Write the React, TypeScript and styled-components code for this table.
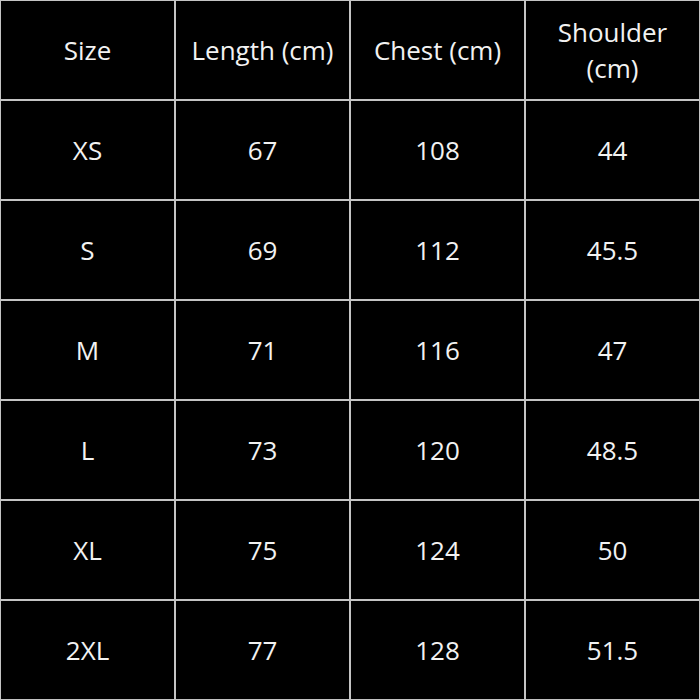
import React from "react";
import styled, { createGlobalStyle } from "styled-components";

const GlobalStyle = createGlobalStyle`
  html, body {
    margin: 0;
    padding: 0;
    background: #000;
  }
`;

const Frame = styled.div`
  width: 700px;
  height: 700px;
  overflow: hidden;
  background: #000;
`;

const Table = styled.table`
  width: 702px;
  height: 702px;
  margin: -1px;
  border-collapse: collapse;
  table-layout: fixed;
  font-family: "Open Sans", "Liberation Sans", sans-serif;
  font-size: 26px;
  color: #f2f2f2;
`;

const Cell = styled.td`
  border: 2px solid #c4c4c4;
  text-align: center;
  vertical-align: middle;
  height: 98px;
  padding: 0;
  line-height: 36px;
`;

const HeadCell = styled(Cell).attrs({ as: "th" })`
  font-weight: 400;
`;

const rows = [
  ["XS", "67", "108", "44"],
  ["S", "69", "112", "45.5"],
  ["M", "71", "116", "47"],
  ["L", "73", "120", "48.5"],
  ["XL", "75", "124", "50"],
  ["2XL", "77", "128", "51.5"],
];

const App = () => {
  return (
    <>
      <GlobalStyle />
      <Frame>
        <Table>
          <thead>
            <tr>
              <HeadCell>Size</HeadCell>
              <HeadCell>Length (cm)</HeadCell>
              <HeadCell>Chest (cm)</HeadCell>
              <HeadCell>
                Shoulder
                <br />
                (cm)
              </HeadCell>
            </tr>
          </thead>
          <tbody>
            {rows.map((r) => (
              <tr key={r[0]}>
                {r.map((v, i) => (
                  <Cell key={i}>{v}</Cell>
                ))}
              </tr>
            ))}
          </tbody>
        </Table>
      </Frame>
    </>
  );
};

export default App;
